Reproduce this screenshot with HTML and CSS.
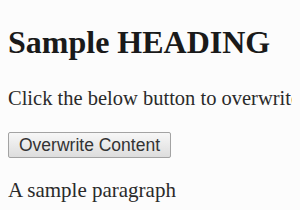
FILE: index.html
```html
<!DOCTYPE html>
<html lang="en">
<head>
    <meta charset="UTF-8">
    <title>Overwrite Content</title>
    <link rel="stylesheet" href="styles.css">
</head>
<body>
    <h1>Sample HEADING</h1>
    <p class="intro">Click the below button to overwrite the content of this page.</p>
    <div class="actions">
        <button type="button" class="btn">Overwrite Content</button>
    </div>
    <p class="sample">A sample paragraph</p>
</body>
</html>
```

FILE: styles.css
```css
body {
    font-family: "Liberation Serif", "Times New Roman", serif;
    margin: 8px;
    color: #1a1a1a;
    background: #fcfcfc;
    white-space: nowrap;
    overflow: hidden;
}
h1 {
    font-size: 32px;
    line-height: 36px;
    margin: 16px 0 26px;
}
p {
    font-size: 21px;
    line-height: 24px;
    color: #2a2a2a;
}
.intro {
    font-size: 20.5px;
    margin: 0 0 22px;
}
.actions {
    height: 26px;
}
.btn {
    font-family: "Liberation Sans", Arial, sans-serif;
    font-size: 17.5px;
    height: 26px;
    padding: 0 10px;
    color: #333;
    background: linear-gradient(#f7f7f7, #dddddd);
    border: 1px solid #a3a3a3;
    border-radius: 2px;
    vertical-align: top;
}
.sample {
    margin: 20px 0 0;
}
```
